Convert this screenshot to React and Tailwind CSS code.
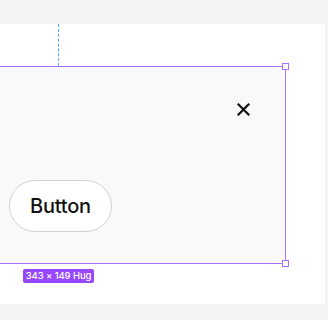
export default function App() {
  return (
    <div className="w-[328px] h-[320px] bg-[#f3f3f3] overflow-hidden pt-[24px]" style={{ fontFamily: "Inter, 'Noto Sans', sans-serif" }}>
      <div className="w-[325px] h-[280px] bg-white flex flex-col">
        <div className="ml-[58px] h-[42px] w-0 border-l border-dashed border-[#4fa8ff]" />
        <div className="relative ml-[-60px] w-[346px] h-[198px] border border-[#a772ff] flex">
          <div className="flex-1 rounded-[14px] bg-[#f9f9f9] flex flex-col justify-between">
            <div className="flex justify-end pt-[36px] pr-[35px]">
              <svg width="13" height="13" viewBox="0 0 13 13" fill="none" stroke="#111" strokeWidth="2.2" strokeLinecap="square">
                <path d="M1.5 1.5 L11.5 11.5 M11.5 1.5 L1.5 11.5" />
              </svg>
            </div>
            <div className="pl-[68px] pb-[31px]">
              <div className="w-[103px] h-[52px] rounded-full border border-[#d2d2d2] bg-white flex items-center justify-center text-[20px] font-medium text-[#111] tracking-[-0.2px]">
                Button
              </div>
            </div>
          </div>
          <div className="absolute right-[-4px] top-[-4px] w-[7px] h-[7px] border border-[#a772ff] bg-white" />
          <div className="absolute right-[-4px] bottom-[-4px] w-[7px] h-[7px] border border-[#a772ff] bg-white" />
        </div>
        <div className="ml-[23px] mt-[5px] w-[71px] h-[14px] rounded-[2px] bg-[#9747ff] text-white text-[9.5px] leading-[14px] font-medium text-center tracking-[-0.1px]">
          343 × 149 Hug
        </div>
      </div>
    </div>
  );
}
